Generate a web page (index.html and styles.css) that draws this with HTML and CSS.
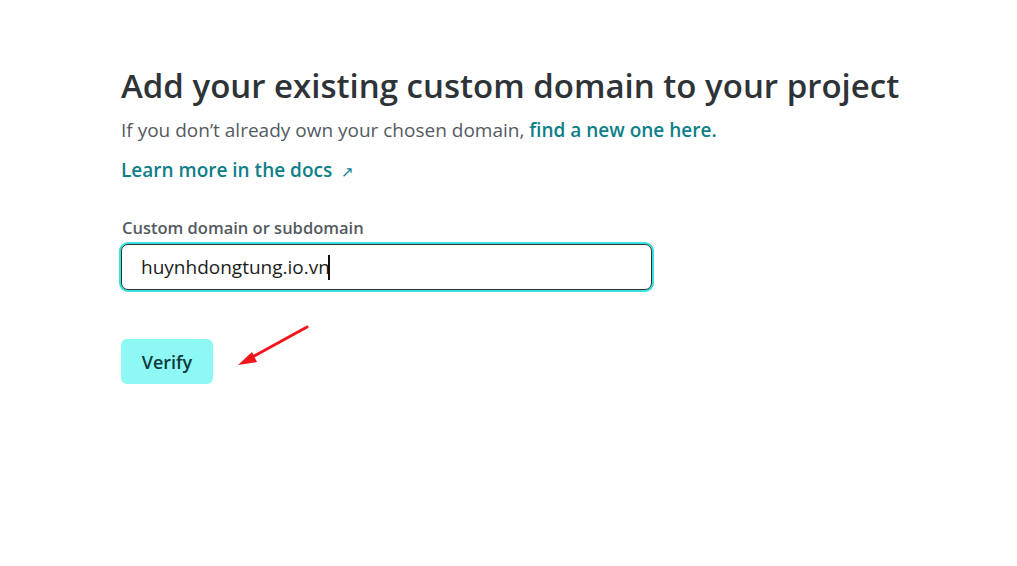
FILE: index.html
```html
<!DOCTYPE html>
<html lang="en">
<head>
    <meta charset="UTF-8">
    <meta name="viewport" content="width=device-width, initial-scale=1.0">
    <title>Add custom domain</title>
    <link rel="stylesheet" href="styles.css">
</head>
<body>

    <!-- Custom domain form -->
    <main class="page">
        <h1 class="title">Add your existing custom domain to your project</h1>
        <p class="intro">If you don’t already own your chosen domain, <a href="#" class="link">find a new one here.</a></p>
        <p class="docs"><a href="#" class="link">Learn more in the docs <span class="arrow-ne">↗</span></a></p>

        <form class="domain-form">
            <label for="domain" class="field-label">Custom domain or subdomain</label>
            <div class="input-wrap">
                <input type="text" id="domain" class="field-input" value="huynhdongtung.io.vn">
                <span class="caret"></span>
            </div>

            <div class="actions">
                <button type="button" class="btn-verify">Verify</button>
                <!-- annotation arrow -->
                <svg class="annotation" width="80" height="50" viewBox="0 0 80 50">
                    <line x1="76" y1="4" x2="16" y2="37" stroke="#f2141b" stroke-width="3" stroke-linecap="round"/>
                    <polygon points="7,42 21,29 26,39" fill="#f2141b"/>
                </svg>
            </div>
        </form>
    </main>

</body>
</html>
```

FILE: styles.css
```css
/* Reset */
* {
    margin: 0;
    padding: 0;
    box-sizing: border-box;
}

body {
    font-family: 'Open Sans', 'Noto Sans', sans-serif;
    background: #fff;
    color: #2e3338;
}

.page {
    padding: 62px 0 0 121px;
}

.title {
    font-size: 33px;
    font-weight: 600;
    line-height: 48px;
    color: #2e3338;
}

.intro {
    font-size: 19px;
    line-height: 28px;
    color: #545a61;
    margin-top: 6px;
}

.link {
    color: #0e7f88;
    font-weight: 600;
    text-decoration: none;
}

.docs {
    font-size: 19px;
    line-height: 28px;
    margin-top: 12px;
}

.arrow-ne {
    font-weight: 400;
    font-size: 15px;
    margin-left: 4px;
}

.domain-form {
    margin-top: 32px;
}

.field-label {
    display: block;
    font-size: 16.5px;
    font-weight: 600;
    color: #545a61;
    margin-left: 1px;
    line-height: 22px;
}

.input-wrap {
    position: relative;
    width: 531px;
    margin-top: 5px;
}

.field-input {
    width: 100%;
    height: 46px;
    border: 1px solid #2e3338;
    border-radius: 7px;
    outline: none;
    box-shadow: 0 0 0 2px #38e1dc;
    padding: 0 19px;
    font-family: inherit;
    font-size: 19px;
    color: #1a1d20;
    background: #fff;
}

.caret {
    position: absolute;
    left: 207px;
    top: 11px;
    width: 2px;
    height: 25px;
    background: #111;
}

.actions {
    position: relative;
    margin-top: 49px;
}

.btn-verify {
    background: #8ef9f4;
    color: #0d3b3d;
    border: none;
    border-radius: 6px;
    font-family: inherit;
    font-size: 18px;
    font-weight: 600;
    width: 92px;
    height: 45px;
    cursor: pointer;
}

.annotation {
    position: absolute;
    left: 110px;
    top: -16px;
}
```
